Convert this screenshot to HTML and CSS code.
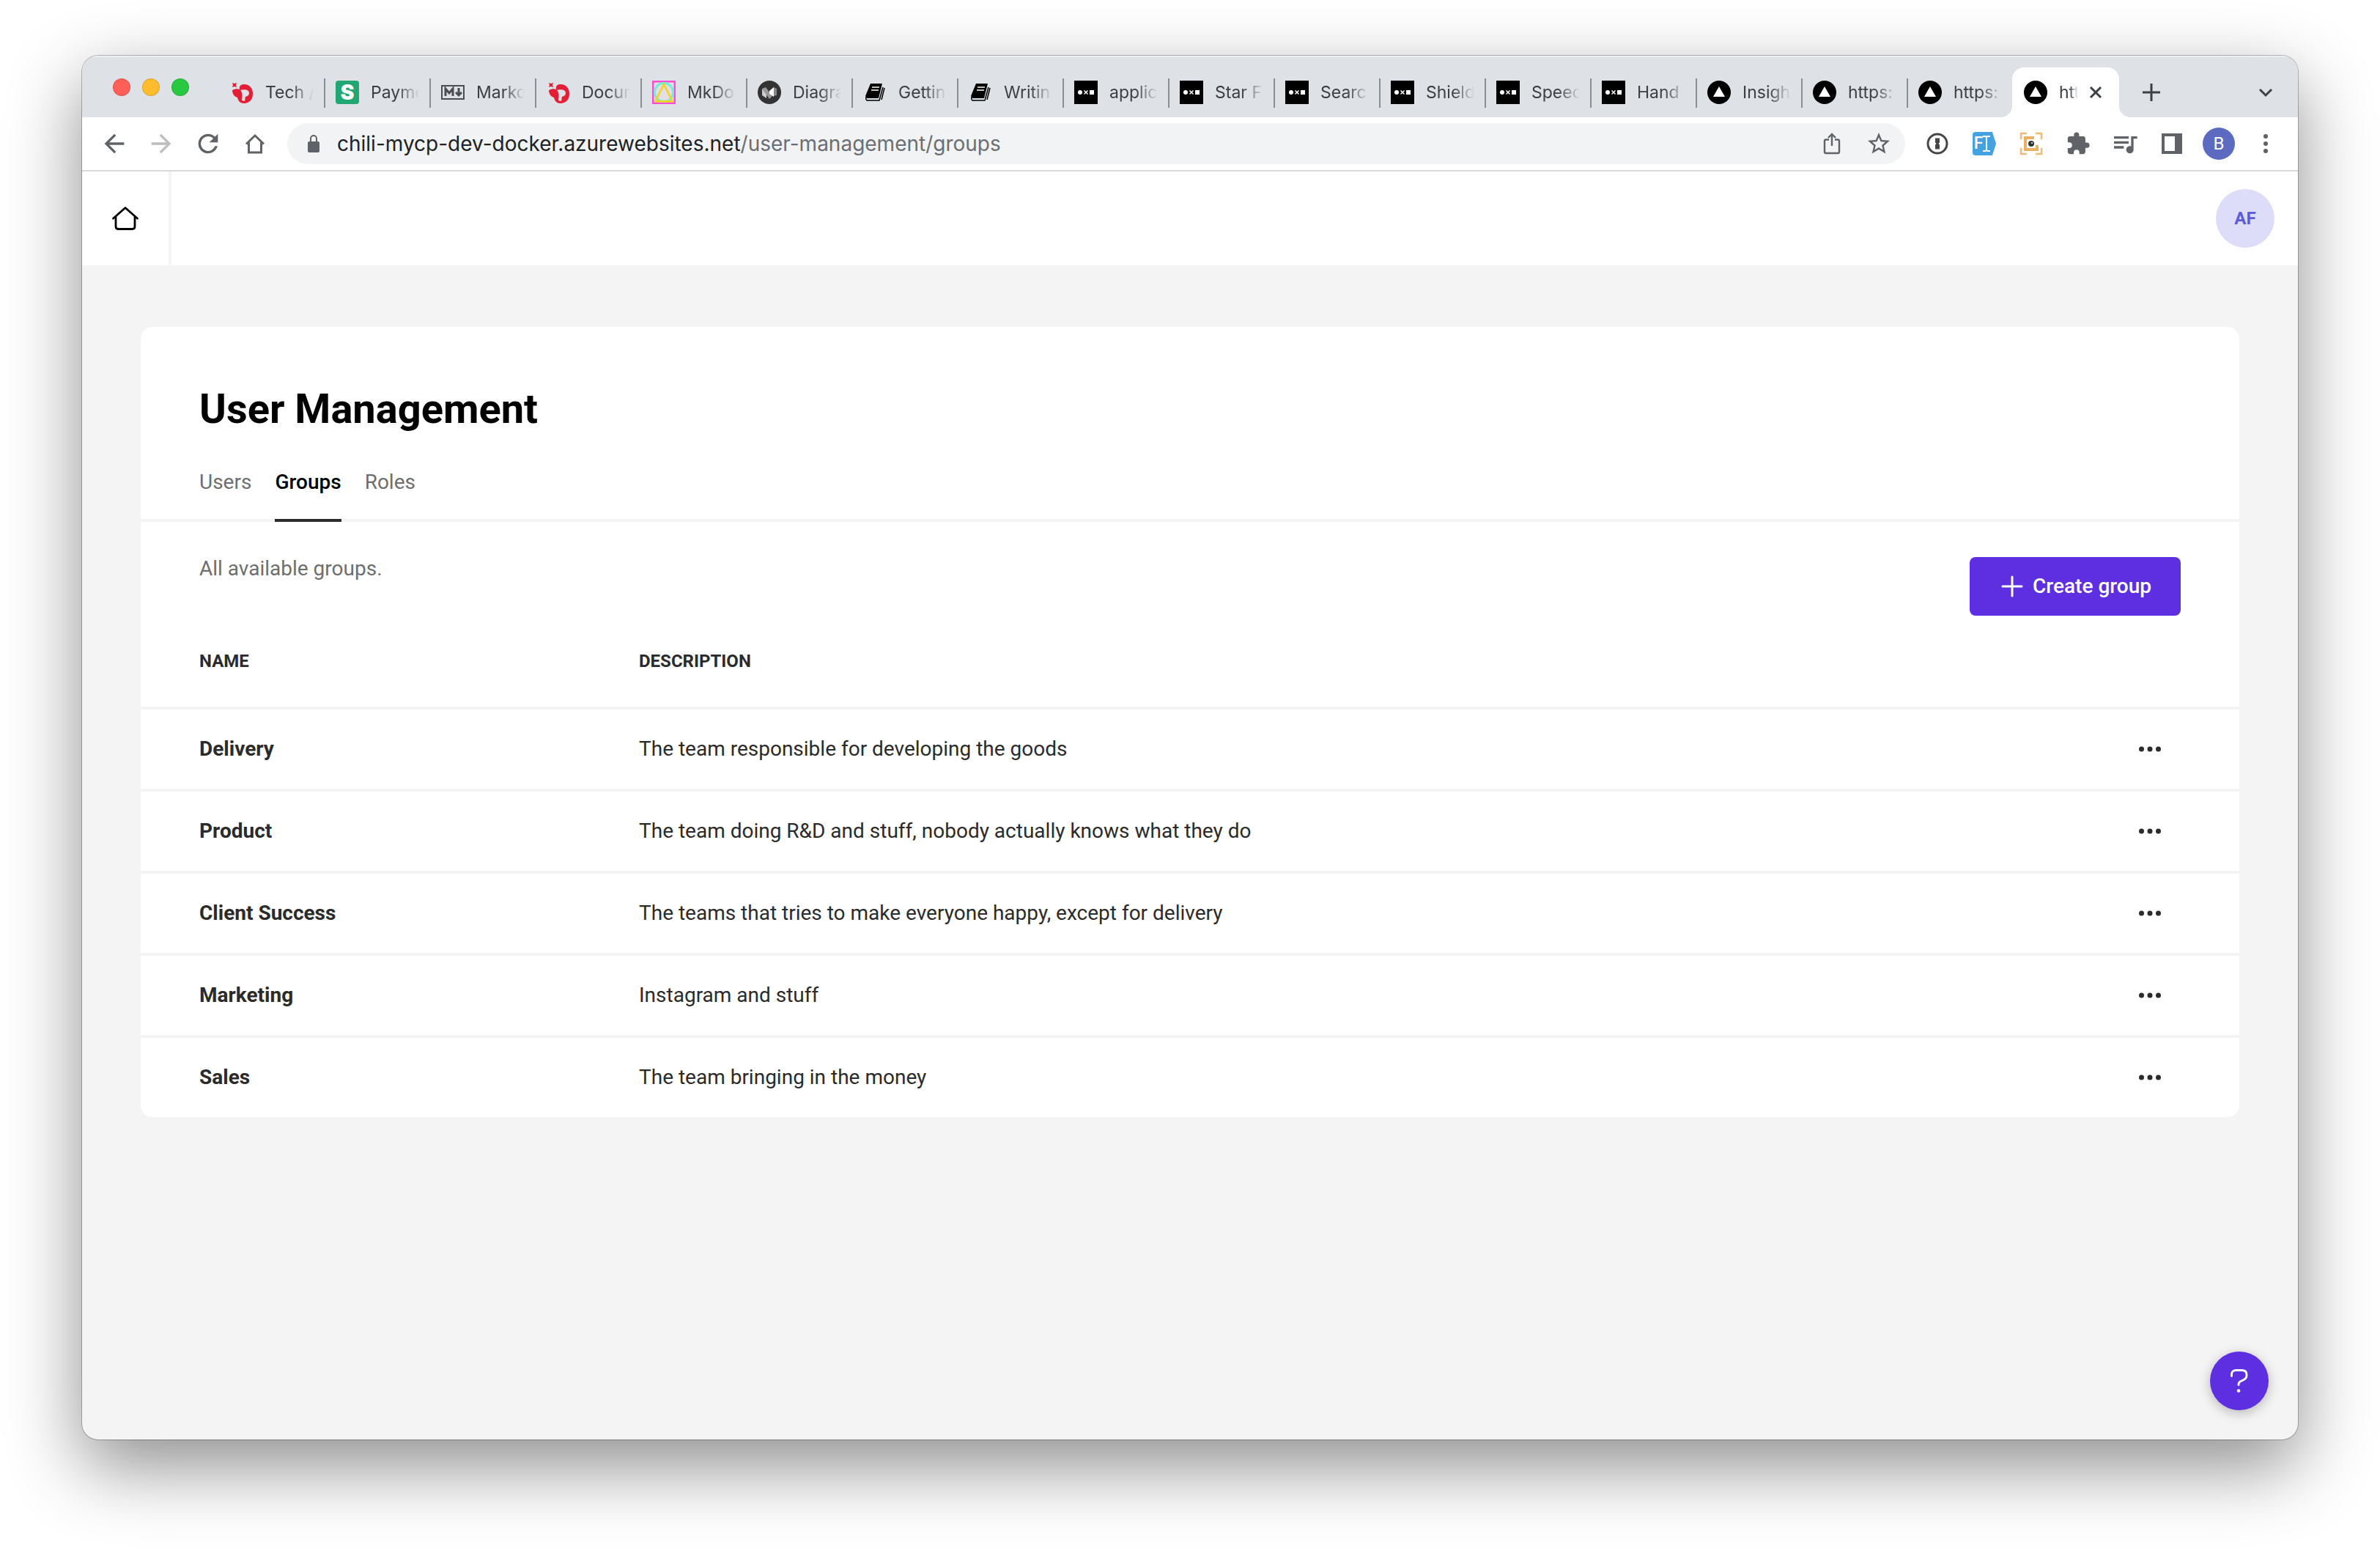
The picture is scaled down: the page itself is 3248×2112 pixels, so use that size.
FILE: index.html
```
<!DOCTYPE html>
<html lang="en">
<head>
<meta charset="utf-8">
<title>User Management</title>
<link rel="stylesheet" href="styles.css">
</head>
<body>
<svg class="sprite" aria-hidden="true">
  <symbol id="redocly" viewBox="0 0 32 32"><path fill="#e41e35" fill-rule="evenodd" d="M3 3l3 1 3-1-1 3 1 3-3-1-3 1 1-3zM3 13c4-2 7-2 10-1-1-4 1-7 6-7 8 0 12 6 12 13 0 8-5 13-12 13-5 0-8-3-9-8-4-1-7-5-7-10zM14 13c3 3 3 7 2 14l4 1c1-3 0-4 1-6 3-1 5-2 5-5 0-4-5-6-12-4z"/></symbol>
  <symbol id="markdown" viewBox="0 0 32 32"><path fill="none" stroke="#4b4d50" stroke-width="2" d="M1 7h30v18H1z"/><path fill="none" stroke="#4b4d50" stroke-width="3" d="M6 21V11l5 6 5-6v10M24 10v10M20 16l4 4 4-4"/></symbol>
  <symbol id="mkdocs" viewBox="0 0 32 32"><path fill="#e4dfe6" stroke="#f84fd2" stroke-width="2.500" d="M1.200 1.200h29.600v29.600H1.200z"/><circle cx="16" cy="16" r="12.500" fill="none" stroke="#6ff0d3" stroke-width="3"/><path fill="none" stroke="#f6d21c" stroke-width="2.500" d="M16 5L4.500 28.200h23z"/></symbol>
  <symbol id="mermaid" viewBox="0 0 32 32"><circle cx="16" cy="16" r="16" fill="#333"/><path fill="#999" d="M6 11l5-2 9 12-4 4z"/><path fill="#ccc" d="M6 11l6 8v5l-6-4z"/><path fill="#fff" d="M16 14l6-5v13l-6-4z"/><path fill="#888" d="M22 9l4 2v9l-4 1z"/></symbol>
  <symbol id="book" viewBox="0 0 32 32"><path d="M10 4h16l-5 20H5l-2-3z"/><path fill="none" stroke="#000" stroke-width="1.500" d="M4 22c-1 5 1 5 3 5h15l5-18M25 26l4-16"/><path stroke="#fff" stroke-width="1.500" d="M12 9h10M11 13h10"/></symbol>
  <symbol id="chili" viewBox="0 0 32 32"><path d="M0 0h32v32H0z"/><circle cx="8" cy="16" r="3" fill="#fff"/><path stroke="#fff" stroke-width="1.500" d="M13.500 13.500l5 5m0-5l-5 5"/><path fill="#fff" d="M21 13h6v6h-6z"/></symbol>
  <symbol id="triangle" viewBox="0 0 32 32"><circle cx="16" cy="16" r="16"/><path fill="#fff" d="M16 8l8 14H8z"/></symbol>
</svg>

<div class="window">
  <div class="tabstrip">
    <div class="lights"><span class="light red"></span><span class="light amber"></span><span class="light green"></span></div>
    <div class="tabs" role="tablist" aria-label="Open pages">
      <button class="tab" role="tab"><svg class="favicon"><use href="#redocly"/></svg><span class="tab-label">Tech /</span></button>
      <button class="tab" role="tab"><span class="favicon stripe">S</span><span class="tab-label">Payme</span></button>
      <button class="tab" role="tab"><svg class="favicon"><use href="#markdown"/></svg><span class="tab-label">Markd</span></button>
      <button class="tab" role="tab"><svg class="favicon"><use href="#redocly"/></svg><span class="tab-label">Docum</span></button>
      <button class="tab" role="tab"><svg class="favicon"><use href="#mkdocs"/></svg><span class="tab-label">MkDo</span></button>
      <button class="tab" role="tab"><svg class="favicon"><use href="#mermaid"/></svg><span class="tab-label">Diagra</span></button>
      <button class="tab" role="tab"><svg class="favicon"><use href="#book"/></svg><span class="tab-label">Gettin</span></button>
      <button class="tab" role="tab"><svg class="favicon"><use href="#book"/></svg><span class="tab-label">Writin</span></button>
      <button class="tab" role="tab"><svg class="favicon"><use href="#chili"/></svg><span class="tab-label">applic</span></button>
      <button class="tab" role="tab"><svg class="favicon"><use href="#chili"/></svg><span class="tab-label">Star F</span></button>
      <button class="tab" role="tab"><svg class="favicon"><use href="#chili"/></svg><span class="tab-label">Searc</span></button>
      <button class="tab" role="tab"><svg class="favicon"><use href="#chili"/></svg><span class="tab-label">Shield</span></button>
      <button class="tab" role="tab"><svg class="favicon"><use href="#chili"/></svg><span class="tab-label">Speed</span></button>
      <button class="tab" role="tab"><svg class="favicon"><use href="#chili"/></svg><span class="tab-label">Hand</span></button>
      <button class="tab" role="tab"><svg class="favicon"><use href="#triangle"/></svg><span class="tab-label">Insigh</span></button>
      <button class="tab" role="tab"><svg class="favicon"><use href="#triangle"/></svg><span class="tab-label">https:</span></button>
      <button class="tab last" role="tab"><svg class="favicon"><use href="#triangle"/></svg><span class="tab-label">https:</span></button>
      <div class="tab active" role="tab" aria-selected="true"><svg class="favicon"><use href="#triangle"/></svg><span class="tab-label">htt</span><button class="close" aria-label="Close tab"><svg width="20" height="20" viewBox="0 0 20 20"><path d="M3 3l14 14M17 3L3 17"/></svg></button></div>
    </div>
    <button class="strip-button" aria-label="New tab"><svg width="28" height="28" viewBox="0 0 28 28"><path d="M14 2v24M2 14h24"/></svg></button>
    <button class="strip-button tab-search" aria-label="Search tabs"><svg width="28" height="28" viewBox="0 0 28 28"><path d="M6 10l8 8 8-8"/></svg></button>
  </div>

  <div class="toolbar">
    <div class="tools">
      <button class="tool" aria-label="Back"><svg width="40" height="40" viewBox="0 0 24 24"><path d="M20 11H7.830l5.590-5.590L12 4l-8 8 8 8 1.410-1.410L7.830 13H20v-2z"/></svg></button>
      <button class="tool dim" aria-label="Forward"><svg width="40" height="40" viewBox="0 0 24 24"><path d="M12 4l-1.410 1.410L16.170 11H4v2h12.170l-5.580 5.590L12 20l8-8z"/></svg></button>
      <button class="tool" aria-label="Reload"><svg width="40" height="40" viewBox="0 0 24 24"><path d="M17.650 6.350A7.960 7.960 0 0 0 12 4a8 8 0 1 0 7.730 10h-2.080A6 6 0 1 1 12 6c1.660 0 3.140.69 4.220 1.780L13 11h7V4l-2.350 2.350z"/></svg></button>
      <button class="tool" aria-label="Home"><svg width="40" height="40" viewBox="0 0 40 40"><path fill="none" stroke="currentColor" stroke-width="3" d="M8 20.500L20 9l12 11.500M11.500 18v14h17V18"/></svg></button>
    </div>
    <div class="omnibox">
      <span class="lock"><svg width="16" height="26" viewBox="0 0 16 26"><path d="M2 10h12a2 2 0 0 1 2 2v11a2 2 0 0 1-2 2H2a2 2 0 0 1-2-2V12a2 2 0 0 1 2-2z"/><path fill="none" stroke="currentColor" stroke-width="2" d="M4 11V6a4 4 0 0 1 8 0v5"/></svg></span>
      <div class="url" role="textbox" contenteditable="true" spellcheck="false" aria-label="Address">chili-mycp-dev-docker.azurewebsites.net<span class="path">/user-management/groups</span></div>
      <button class="tool" aria-label="Share"><svg width="40" height="40" viewBox="0 0 40 40"><path fill="none" stroke="currentColor" stroke-width="2.400" d="M16 14.500h-4a2 2 0 0 0-2 2V31a2 2 0 0 0 2 2h16a2 2 0 0 0 2-2V16.500a2 2 0 0 0-2-2h-4M20 23V7M15 12l5-5 5 5"/></svg></button>
      <button class="tool" aria-label="Bookmark"><svg width="36" height="36" viewBox="0 0 24 24"><path d="M22 9.240l-7.190-.62L12 2 9.190 8.630 2 9.240l5.460 4.730L5.820 21 12 17.270 18.180 21l-1.630-7.030L22 9.240zM12 15.400l-3.760 2.270 1-4.280-3.320-2.880 4.380-.38L12 6.100l1.710 4.040 4.380.38-3.320 2.880 1 4.280L12 15.400z"/></svg></button>
    </div>
    <div class="tools">
      <button class="tool" aria-label="1Password"><svg width="32" height="32" viewBox="0 0 32 32"><circle cx="16" cy="16" r="13" fill="#fff" stroke="#454545" stroke-width="3"/><path fill="#454545" d="M13 8.500h6v6l-1.500 1.500 1.500 1.500v6h-6v-6l1.500-1.500-1.500-1.500z"/></svg></button>
      <button class="tool" aria-label="Form filler"><span class="filler">F<svg width="10" height="24" viewBox="0 0 10 24"><path fill="none" stroke="#fff" stroke-width="2" d="M0 2h3q2 0 2 2v16q0 2-2 2H0M10 2H7Q5 2 5 4v16q0 2 2 2h3"/></svg></span></button>
      <button class="tool" aria-label="Screen capture"><svg width="32" height="32" viewBox="0 0 32 32"><path fill="none" stroke="#f0bd72" stroke-width="2.500" d="M2 10V2h8M22 2h8v8M30 22v8h-8M10 30H2v-8"/><path fill="#fff" stroke="#e9b160" stroke-width="4" d="M20 8H8v16h16v-6"/><circle cx="16" cy="16" r="4" fill="#333"/><circle cx="17" cy="15" r="1" fill="#fff"/></svg></button>
      <button class="tool" aria-label="Extensions"><svg width="34" height="34" viewBox="0 0 24 24"><path d="M20.500 11H19V7c0-1.100-.9-2-2-2h-4V3.500a2.500 2.500 0 0 0-5 0V5H4c-1.100 0-1.990.9-1.990 2v3.800H3.500a2.700 2.700 0 0 1 0 5.400H2V20c0 1.100.9 2 2 2h3.800v-1.500a2.700 2.700 0 0 1 5.400 0V22H17c1.100 0 2-.9 2-2v-4h1.500a2.500 2.500 0 0 0 0-5z"/></svg></button>
      <button class="tool" aria-label="Media"><svg width="40" height="40" viewBox="0 0 24 24"><path d="M15 6H3v2h12V6zm0 4H3v2h12v-2zM3 16h8v-2H3v2zM17 6v8.180c-.31-.11-.65-.18-1-.18-1.660 0-3 1.340-3 3s1.340 3 3 3 3-1.340 3-3V8h3V6h-5z"/></svg></button>
      <button class="tool" aria-label="Side panel"><svg width="28" height="28" viewBox="0 0 28 28"><path fill-rule="evenodd" d="M0 0h28v28H0zM4 4v20h14V4z"/></svg></button>
      <button class="tool" aria-label="Profile"><span class="profile">B</span></button>
      <button class="tool" aria-label="Menu"><svg width="8" height="28" viewBox="0 0 8 28"><circle cx="4" cy="4" r="3"/><circle cx="4" cy="14" r="3"/><circle cx="4" cy="24" r="3"/></svg></button>
    </div>
  </div>

  <header class="app-header">
    <a class="home" href="#" aria-label="Home"><svg width="40" height="36" viewBox="0 0 40 36"><path fill="none" stroke="#000" stroke-width="2.800" stroke-linecap="round" stroke-linejoin="round" d="M3.500 18L20 3.500 36.500 18M7 15.500V29q0 3.500 3.500 3.500h19q3.500 0 3.500-3.500V15.500"/></svg></a>
    <button class="avatar">AF</button>
  </header>

  <main class="content">
    <section class="card">
      <h1 class="title">User Management</h1>
      <nav class="nav">
        <a class="nav-link" href="#">Users</a>
        <a class="nav-link current" href="#" aria-current="page">Groups</a>
        <a class="nav-link" href="#">Roles</a>
      </nav>
      <div class="intro">
        <p class="hint">All available groups.</p>
        <button class="create"><svg width="36" height="36" viewBox="0 0 36 36"><path d="M18 5v26M5 18h26"/></svg>Create group</button>
      </div>
      <table class="groups">
        <thead>
          <tr><th class="name" scope="col">NAME</th><th scope="col">DESCRIPTION</th><th class="actions"></th></tr>
        </thead>
        <tbody>
          <tr><th class="name" scope="row">Delivery</th><td>The team responsible for developing the goods</td><td class="actions"><button class="more" aria-label="Delivery actions"><svg width="32" height="8" viewBox="0 0 32 8"><circle cx="4.500" cy="4" r="3.500"/><circle cx="16" cy="4" r="3.500"/><circle cx="27.500" cy="4" r="3.500"/></svg></button></td></tr>
          <tr><th class="name" scope="row">Product</th><td>The team doing R&amp;D and stuff, nobody actually knows what they do</td><td class="actions"><button class="more" aria-label="Product actions"><svg width="32" height="8" viewBox="0 0 32 8"><circle cx="4.500" cy="4" r="3.500"/><circle cx="16" cy="4" r="3.500"/><circle cx="27.500" cy="4" r="3.500"/></svg></button></td></tr>
          <tr><th class="name" scope="row">Client Success</th><td>The teams that tries to make everyone happy, except for delivery</td><td class="actions"><button class="more" aria-label="Client Success actions"><svg width="32" height="8" viewBox="0 0 32 8"><circle cx="4.500" cy="4" r="3.500"/><circle cx="16" cy="4" r="3.500"/><circle cx="27.500" cy="4" r="3.500"/></svg></button></td></tr>
          <tr><th class="name" scope="row">Marketing</th><td>Instagram and stuff</td><td class="actions"><button class="more" aria-label="Marketing actions"><svg width="32" height="8" viewBox="0 0 32 8"><circle cx="4.500" cy="4" r="3.500"/><circle cx="16" cy="4" r="3.500"/><circle cx="27.500" cy="4" r="3.500"/></svg></button></td></tr>
          <tr><th class="name" scope="row">Sales</th><td>The team bringing in the money</td><td class="actions"><button class="more" aria-label="Sales actions"><svg width="32" height="8" viewBox="0 0 32 8"><circle cx="4.500" cy="4" r="3.500"/><circle cx="16" cy="4" r="3.500"/><circle cx="27.500" cy="4" r="3.500"/></svg></button></td></tr>
        </tbody>
      </table>
    </section>
    <button class="help" aria-label="Help"><svg width="32" height="40" viewBox="0 0 32 40"><path fill="none" stroke="#fff" stroke-width="2.800" stroke-linecap="round" stroke-linejoin="round" d="M5.500 13.500v-2q0-6 6-6h8q6.500 0 6.500 6v1q0 4-4 6l-4 2q-3 1.500-3 4v1"/><circle cx="15" cy="33.500" r="2.300" fill="#fff"/></svg></button>
  </main>
</div>
</body>
</html>
```
FILE: styles.css
```
* {
  box-sizing: border-box;
}

body {
  display: flex;
  min-height: 100vh;
  margin: 0;
  padding: 76px 112px 148px;
  overflow-x: hidden;
  background: #fff;
  color: #2b2b2b;
  font: 28px/40px Roboto, sans-serif;
}

button {
  margin: 0;
  padding: 0;
  border: 0;
  background: none;
  color: inherit;
  font: inherit;
  cursor: pointer;
}

a {
  color: inherit;
  text-decoration: none;
}

svg {
  display: block;
  flex: none;
}

.sprite {
  position: absolute;
  width: 0;
  height: 0;
}

.window {
  display: flex;
  flex: 1;
  flex-direction: column;
  min-width: 0;
  overflow: hidden;
  border-radius: 22px;
  background: #f4f4f4;
  box-shadow: 0 0 0 1px rgba(0, 0, 0, 0.25), 0 36px 100px rgba(0, 0, 0, 0.45);
}

/* Tab strip */
.tabstrip {
  display: flex;
  align-items: flex-end;
  height: 84px;
  padding: 0 12px 0 42px;
  background: #dee1e6;
  box-shadow: inset 0 2px #eceef1;
  color: #3c4043;
  font: 23px/32px Inter, "Liberation Sans", sans-serif;
}

.lights {
  display: flex;
  gap: 16px;
  height: 84px;
  padding-top: 31px;
  margin-right: 42px;
}

.light {
  width: 24px;
  height: 24px;
  border: 1px solid rgba(0, 0, 0, 0.12);
  border-radius: 50%;
}

.red {
  background: #ff5f57;
}

.amber {
  background: #febc2e;
}

.green {
  background: #28c840;
}

.tabs {
  display: flex;
  min-width: 0;
}

.tab {
  display: flex;
  flex: 0 1 144px;
  align-items: center;
  width: 144px;
  height: 68px;
  padding-left: 14px;
  background: linear-gradient(#8b8f94, #8b8f94) right 15px / 2px 40px no-repeat;
  background-position: right 15px;
}

.tab.last {
  background: none;
}

.tab.active {
  position: relative;
  flex-basis: 146px;
  width: 146px;
  border-radius: 16px 16px 0 0;
  margin-left: -2px;
  padding-left: 16px;
  background: #fff;
}

.tab.active::before,
.tab.active::after {
  position: absolute;
  bottom: 0;
  width: 16px;
  height: 16px;
  content: "";
}

.tab.active::before {
  right: 100%;
  background: radial-gradient(circle at 0 0, transparent 16px, #fff 16px);
}

.tab.active::after {
  left: 100%;
  background: radial-gradient(circle at 100% 0, transparent 16px, #fff 16px);
}

.favicon {
  flex: none;
  width: 32px;
  height: 32px;
  margin-right: 16px;
}

.stripe {
  border-radius: 4px;
  background: #21a772;
  color: #fff;
  font-size: 28px;
  font-weight: 900;
}

.tab-label {
  flex: none;
  width: 66px;
  overflow: hidden;
  text-align: left;
  white-space: nowrap;
  -webkit-mask-image: linear-gradient(to right, #000 55%, transparent);
  mask-image: linear-gradient(to right, #000 55%, transparent);
}

.active .tab-label {
  width: 26px;
}

.close {
  margin-left: 14px;
}

.close svg,
.strip-button svg {
  fill: none;
  stroke: #3c4043;
  stroke-width: 3;
}

.strip-button {
  display: flex;
  flex: none;
  align-items: center;
  justify-content: center;
  width: 64px;
  height: 68px;
  margin-left: 12px;
}

.tab-search {
  margin-left: auto;
}

/* Toolbar */
.toolbar {
  display: flex;
  align-items: center;
  gap: 12px;
  height: 74px;
  padding: 0 12px;
  border-bottom: 2px solid #dadada;
  background: #fff;
  color: #5f6368;
}

.tools {
  display: flex;
  flex: none;
}

.tool {
  display: flex;
  flex: none;
  align-items: center;
  justify-content: center;
  width: 64px;
  height: 56px;
}

.tool svg,
.lock svg {
  fill: currentColor;
}

.dim {
  color: #bbbdbf;
}

.omnibox {
  display: flex;
  flex: 1;
  align-items: center;
  min-width: 0;
  height: 56px;
  padding: 0 4px;
  border-radius: 28px;
  background: #f1f3f4;
}

.lock {
  display: flex;
  flex: none;
  justify-content: center;
  width: 64px;
}

.url {
  flex: 1;
  min-width: 0;
  overflow: hidden;
  color: #202124;
  font: 28px/40px Inter, "Liberation Sans", sans-serif;
  white-space: nowrap;
}

.path {
  color: #6b6e72;
}

.filler {
  display: flex;
  align-items: center;
  justify-content: center;
  width: 32px;
  height: 32px;
  padding-right: 6px;
  border-radius: 4px;
  background: #43a3e2;
  clip-path: polygon(0 0, 84% 0, 100% 50%, 84% 100%, 0 100%);
  color: #fff;
  font-size: 23px;
  font-weight: 500;
}

.profile {
  width: 44px;
  height: 44px;
  border-radius: 50%;
  background: #5c6bc0;
  color: #fff;
  font-size: 24px;
  line-height: 44px;
}

/* Application */
.app-header {
  display: flex;
  align-items: center;
  justify-content: space-between;
  height: 128px;
  padding-right: 32px;
  background: #fff;
}

.home {
  display: flex;
  align-items: center;
  justify-content: center;
  width: 122px;
  height: 128px;
  border-right: 4px solid #f4f4f4;
}

.avatar {
  width: 80px;
  height: 80px;
  border-radius: 50%;
  background: #dddcf9;
  color: #5b5bdc;
  font-size: 24px;
  font-weight: 700;
}

.content {
  position: relative;
  flex: 1;
  padding: 84px 80px;
}

.card {
  overflow: hidden;
  border-radius: 16px;
  background: #fff;
}

.title {
  margin: 0;
  padding: 80px 80px 0;
  color: #000;
  font-size: 56px;
  font-weight: 700;
  line-height: 64px;
}

.nav {
  display: flex;
  gap: 32px;
  margin-top: 48px;
  padding: 0 80px;
  box-shadow: inset 0 -4px #f4f4f4;
  color: #6e6e6e;
}

.nav-link {
  height: 74px;
}

.current {
  border-bottom: 4px solid #2b2b2b;
  color: #000;
  font-weight: 500;
}

.intro {
  display: flex;
  align-items: flex-start;
  justify-content: space-between;
  padding: 48px 80px 0;
}

.hint {
  margin: 0;
  line-height: 32px;
  color: #6e6e6e;
}

.create {
  display: flex;
  align-items: center;
  gap: 10px;
  height: 80px;
  padding: 0 40px;
  border-radius: 8px;
  background: #5e2fe0;
  color: #fff;
  font-weight: 500;
}

.create svg {
  fill: none;
  stroke: #fff;
  stroke-linecap: round;
  stroke-width: 3;
}

.groups {
  width: 100%;
  border-collapse: separate;
  border-spacing: 0;
  table-layout: fixed;
}

.groups th,
.groups td {
  height: 112px;
  padding: 0;
  border-bottom: 4px solid #f4f4f4;
  text-align: left;
}

.groups thead th {
  height: 128px;
  font-size: 24px;
}

.groups tbody tr:last-child > * {
  height: 108px;
  border-bottom: 0;
}

.groups .name {
  width: 680px;
  padding-left: 80px;
  font-weight: 700;
}

.groups .actions {
  width: 164px;
  padding-right: 80px;
}

.more {
  display: flex;
  align-items: center;
  justify-content: center;
  width: 84px;
  height: 80px;
}

.more svg {
  fill: #2b2b2b;
}

.help {
  position: absolute;
  right: 40px;
  bottom: 40px;
  display: flex;
  align-items: center;
  justify-content: center;
  width: 80px;
  height: 80px;
  border-radius: 50%;
  background: #5e2fe0;
  box-shadow: 0 4px 16px rgba(0, 0, 0, 0.25);
}
```
